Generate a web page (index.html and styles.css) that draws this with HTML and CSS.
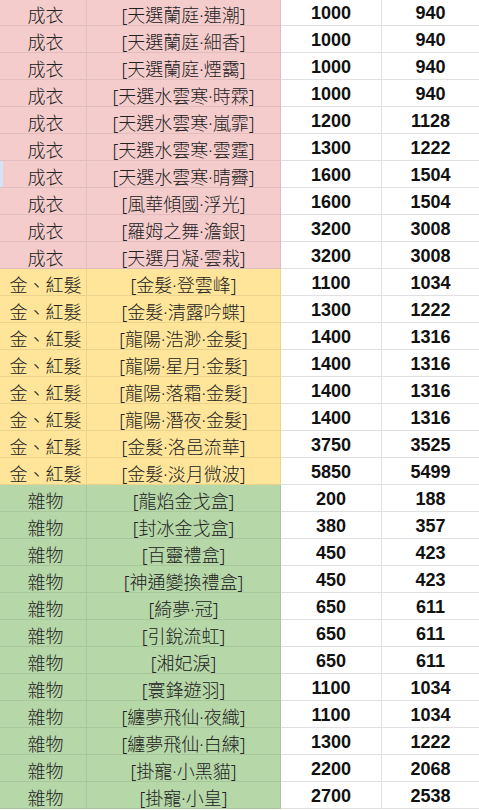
FILE: index.html
```html
<!DOCTYPE html>
<html lang="zh-Hant">
<head>
<meta charset="utf-8">
<link rel="stylesheet" href="styles.css">
</head>
<body>
<div class="sheet">
  <div class="row pink"><div class="c cat">成衣</div><div class="c name">[天選蘭庭·連潮]</div><div class="c num">1000</div><div class="c num">940</div></div>
  <div class="row pink"><div class="c cat">成衣</div><div class="c name">[天選蘭庭·細香]</div><div class="c num">1000</div><div class="c num">940</div></div>
  <div class="row pink"><div class="c cat">成衣</div><div class="c name">[天選蘭庭·煙靄]</div><div class="c num">1000</div><div class="c num">940</div></div>
  <div class="row pink"><div class="c cat">成衣</div><div class="c name">[天選水雲寒·時霖]</div><div class="c num">1000</div><div class="c num">940</div></div>
  <div class="row pink"><div class="c cat">成衣</div><div class="c name">[天選水雲寒·嵐霏]</div><div class="c num">1200</div><div class="c num">1128</div></div>
  <div class="row pink"><div class="c cat">成衣</div><div class="c name">[天選水雲寒·雲霆]</div><div class="c num">1300</div><div class="c num">1222</div></div>
  <div class="row pink selected"><div class="c cat">成衣</div><div class="c name">[天選水雲寒·晴霽]</div><div class="c num">1600</div><div class="c num">1504</div></div>
  <div class="row pink"><div class="c cat">成衣</div><div class="c name">[風華傾國·浮光]</div><div class="c num">1600</div><div class="c num">1504</div></div>
  <div class="row pink"><div class="c cat">成衣</div><div class="c name">[羅姆之舞·澹銀]</div><div class="c num">3200</div><div class="c num">3008</div></div>
  <div class="row pink"><div class="c cat">成衣</div><div class="c name">[天選月凝·雲栽]</div><div class="c num">3200</div><div class="c num">3008</div></div>
  <div class="row yellow"><div class="c cat">金、紅髮</div><div class="c name">[金髮·登雲峰]</div><div class="c num">1100</div><div class="c num">1034</div></div>
  <div class="row yellow"><div class="c cat">金、紅髮</div><div class="c name">[金髮·清露吟蝶]</div><div class="c num">1300</div><div class="c num">1222</div></div>
  <div class="row yellow"><div class="c cat">金、紅髮</div><div class="c name">[龍陽·浩渺·金髮]</div><div class="c num">1400</div><div class="c num">1316</div></div>
  <div class="row yellow"><div class="c cat">金、紅髮</div><div class="c name">[龍陽·星月·金髮]</div><div class="c num">1400</div><div class="c num">1316</div></div>
  <div class="row yellow"><div class="c cat">金、紅髮</div><div class="c name">[龍陽·落霜·金髮]</div><div class="c num">1400</div><div class="c num">1316</div></div>
  <div class="row yellow"><div class="c cat">金、紅髮</div><div class="c name">[龍陽·潛夜·金髮]</div><div class="c num">1400</div><div class="c num">1316</div></div>
  <div class="row yellow"><div class="c cat">金、紅髮</div><div class="c name">[金髮·洛邑流華]</div><div class="c num">3750</div><div class="c num">3525</div></div>
  <div class="row yellow"><div class="c cat">金、紅髮</div><div class="c name">[金髮·淡月微波]</div><div class="c num">5850</div><div class="c num">5499</div></div>
  <div class="row green"><div class="c cat">雜物</div><div class="c name">[龍焰金戈盒]</div><div class="c num">200</div><div class="c num">188</div></div>
  <div class="row green"><div class="c cat">雜物</div><div class="c name">[封冰金戈盒]</div><div class="c num">380</div><div class="c num">357</div></div>
  <div class="row green"><div class="c cat">雜物</div><div class="c name">[百靈禮盒]</div><div class="c num">450</div><div class="c num">423</div></div>
  <div class="row green"><div class="c cat">雜物</div><div class="c name">[神通變換禮盒]</div><div class="c num">450</div><div class="c num">423</div></div>
  <div class="row green"><div class="c cat">雜物</div><div class="c name">[綺夢·冠]</div><div class="c num">650</div><div class="c num">611</div></div>
  <div class="row green"><div class="c cat">雜物</div><div class="c name">[引銳流虹]</div><div class="c num">650</div><div class="c num">611</div></div>
  <div class="row green"><div class="c cat">雜物</div><div class="c name">[湘妃淚]</div><div class="c num">650</div><div class="c num">611</div></div>
  <div class="row green"><div class="c cat">雜物</div><div class="c name">[寰鋒遊羽]</div><div class="c num">1100</div><div class="c num">1034</div></div>
  <div class="row green"><div class="c cat">雜物</div><div class="c name">[纏夢飛仙·夜織]</div><div class="c num">1100</div><div class="c num">1034</div></div>
  <div class="row green"><div class="c cat">雜物</div><div class="c name">[纏夢飛仙·白練]</div><div class="c num">1300</div><div class="c num">1222</div></div>
  <div class="row green"><div class="c cat">雜物</div><div class="c name">[掛寵·小黑貓]</div><div class="c num">2200</div><div class="c num">2068</div></div>
  <div class="row green"><div class="c cat">雜物</div><div class="c name">[掛寵·小皇]</div><div class="c num">2700</div><div class="c num">2538</div></div>
</div>
</body>
</html>
```

FILE: styles.css
```css
html, body {
  margin: 0;
  padding: 0;
  background: #ffffff;
}

.sheet {
  margin-top: -1px;
  width: 479px;
  overflow: hidden;
}

.row {
  display: grid;
  grid-template-columns: 87px 194px 101px 98px;
  height: 27px;
}

.c {
  box-sizing: border-box;
  height: 27px;
  border-bottom: 1px solid #e0e0e0;
  border-right: 1px solid #e0e0e0;
  display: flex;
  align-items: center;
  justify-content: center;
  white-space: nowrap;
  overflow: hidden;
  padding-top: 3px;
}

.cat, .name {
  font-family: "Noto Sans", "Noto Sans CJK TC", sans-serif;
  font-size: 18px;
  font-weight: 300;
  color: #222;
  border-color: rgba(0, 0, 0, 0.07);
}

.cat {
  padding-left: 5px;
}

.num {
  font-family: "Liberation Sans", Arial, sans-serif;
  font-size: 18px;
  font-weight: 700;
  color: #111;
  padding-top: 2px;
}

.pink .cat, .pink .name { background: #f4cccc; }
.yellow .cat, .yellow .name { background: #ffe599; }
.green .cat, .green .name { background: #b6d7a8; }

.selected .cat {
  box-shadow: inset 3px 0 0 #d6e2f5;
}
```
